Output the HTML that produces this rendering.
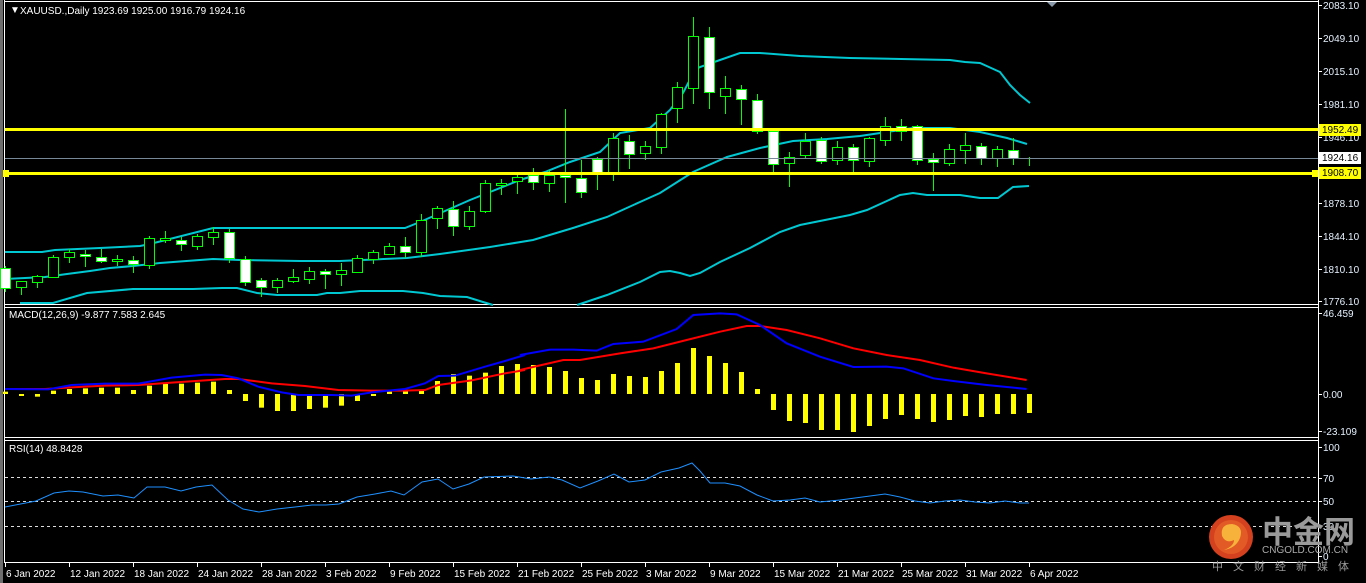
<!DOCTYPE html>
<html><head><meta charset="utf-8"><style>
html,body{margin:0;padding:0;background:#000;width:1366px;height:583px;overflow:hidden}
svg{display:block}
text{font-family:"Liberation Sans",sans-serif;font-size:10px}
</style></head><body>
<svg id="s" width="1366" height="583" xmlns="http://www.w3.org/2000/svg">
<rect width="1366" height="583" fill="#000"/>
<rect x="0" y="0" width="3" height="583" fill="#6e6e6e"/>
<g fill="none" stroke="#fff" stroke-width="1">
<line x1="4.5" y1="0" x2="4.5" y2="563"/>
<line x1="4" y1="1.5" x2="1318" y2="1.5"/>
<line x1="1318.5" y1="0" x2="1318.5" y2="563"/>
<line x1="4" y1="304.5" x2="1318" y2="304.5"/>
<line x1="4" y1="307.5" x2="1318" y2="307.5"/>
<line x1="4" y1="437.5" x2="1318" y2="437.5"/>
<line x1="4" y1="440.5" x2="1318" y2="440.5"/>
<line x1="4" y1="562.5" x2="1318" y2="562.5"/>
</g>
<polygon points="1047,2 1057,2 1052,7" fill="#8a9aaa"/>
<g id="g"></g>
<text x="10" y="13" fill="#fff" font-size="9">▼</text>
<text x="20" y="14" fill="#fff">XAUUSD.,Daily  1923.69 1925.00 1916.79 1924.16</text>
<text x="9" y="318" fill="#fff">MACD(12,26,9) -9.877 7.583 2.645</text>
<text x="9" y="452" fill="#fff">RSI(14) 48.8428</text>
<!-- logo -->
<circle cx="1231" cy="537" r="22" fill="#d4411e"/>
<circle cx="1231" cy="537" r="17" fill="#e25a25"/>
<path d="M1222,536 q-2,-12 10,-12 q12,2 8,14 q-4,10 -16,12 q10,-4 10,-10 q-8,4 -12,-4z" fill="#f6b23a"/>
<text x="1262" y="543" fill="#9a9a9a" style="font-family:'Noto Sans CJK SC',sans-serif;font-size:31px;font-weight:bold">中金网</text>
<text x="1262" y="553" fill="#aaa" font-size="7.5">CNGOLD.COM.CN</text>
<text x="1212" y="570" fill="#9a9a9a" style="font-family:'Noto Sans CJK SC',sans-serif;font-size:11px;letter-spacing:10px">中文财经新媒体</text>
</svg>
<script>
var NS="http://www.w3.org/2000/svg",g=document.getElementById('g');
function el(t,a,txt){var e=document.createElementNS(NS,t);for(var k in a)e.setAttribute(k,a[k]);if(txt!=null)e.textContent=txt;g.appendChild(e);return e;}
function pl(pts,c,w){el('polyline',{points:pts.map(p=>p.join(',')).join(' '),fill:'none',stroke:c,'stroke-width':w});}
var X=i=>5+16*i;
// Bollinger
pl([[5,252],[42,252],[55,250],[100,248],[140,246],[150,244],[213,228],[280,228],[405,228],[420,222],[470,200],[520,180],[545,172],[570,162],[600,152],[620,133],[650,128],[670,110],[683,93],[695,70],[700,67],[720,60],[740,53],[760,53],[800,56],[850,58],[950,60],[965,62],[980,63],[1000,72],[1010,85],[1020,95],[1030,103]],'#00c8d2',2);
pl([[5,279],[45,277],[67,274],[90,271],[110,268],[133,266],[160,263],[213,259],[240,260],[300,261],[340,261],[407,258],[440,254],[490,247],[533,240],[573,228],[607,217],[640,202],[660,193],[693,172],[727,157],[760,148],[793,141],[827,139],[860,136],[887,132],[913,128],[950,128],[980,132],[1007,138],[1027,144]],'#00c8d2',2);
pl([[20,303],[53,303],[87,293],[133,289],[193,289],[222,288],[237,288],[257,293],[277,295],[317,295],[327,293],[340,293],[360,291],[403,291],[423,293],[440,296],[467,297],[483,302],[493,305]],'#00c8d2',2);
pl([[577,305],[607,295],[640,282],[660,272],[670,271],[680,273],[690,276],[700,273],[720,262],[750,248],[780,232],[800,225],[850,215],[867,210],[900,195],[913,193],[927,195],[960,195],[980,198],[998,198],[1013,187],[1029,186]],'#00c8d2',2);
// candles: bodyTop, bodyBot, wickTop, wickBot, bear
var C=[[268,288,266,292,1],[281,287,281,295,0],[276,282,275,288,0],[257,277,255,277,0],[252,257,249,263,0],[254,256,250,267,1],[257,261,249,263,1],[259,261,255,266,0],[260,264,256,273,1],[238,265,236,269,0],[238,240,231,243,0],[240,244,237,251,1],[236,246,234,250,0],[232,237,227,245,0],[232,258,229,263,1],[259,282,256,286,1],[280,287,278,297,1],[280,287,278,293,0],[277,281,269,283,0],[271,279,267,284,0],[271,274,269,289,1],[270,274,263,286,0],[258,272,255,273,0],[252,259,250,264,0],[246,254,243,254,0],[246,252,237,258,1],[220,252,214,257,0],[208,218,206,229,0],[209,226,201,236,1],[211,226,206,230,0],[183,211,180,213,0],[183,185,179,195,0],[177,181,173,194,0],[175,182,168,190,1],[175,183,170,192,0],[175,177,109,203,1],[178,192,160,198,1],[159,172,157,190,1],[138,172,133,181,0],[141,154,135,169,1],[146,153,141,160,0],[114,147,113,154,0],[87,108,82,123,0],[36,88,17,104,0],[37,92,27,109,1],[88,96,76,114,0],[89,99,85,125,1],[100,131,94,134,1],[131,164,128,172,1],[157,163,152,187,0],[141,155,133,158,0],[140,161,137,164,1],[147,160,141,165,0],[147,160,144,172,1],[138,161,137,167,0],[126,140,117,146,0],[126,131,119,141,1],[126,160,125,165,1],[159,162,153,191,1],[149,163,144,166,0],[145,150,133,164,0],[146,158,143,165,1],[149,158,146,167,0],[150,158,138,165,1],[158,158,157,166,0]];
C.forEach(function(c,i){var x=X(i)+0.5;
el('line',{x1:x,y1:c[2],x2:x,y2:c[3],stroke:'#00ff00','stroke-width':1});
if(c[1]-c[0]<1){el('line',{x1:x-5,y1:c[0]+.5,x2:x+5,y2:c[0]+.5,stroke:'#00ff00'});}
else el('rect',{x:x-5,y:c[0]+.5,width:10,height:c[1]-c[0],fill:c[4]?'#fff':'#000',stroke:'#00ff00','stroke-width':1});
});
// horizontal lines
el('line',{x1:5,y1:158.5,x2:1318,y2:158.5,stroke:'#778899','stroke-width':1});
el('rect',{x:5,y:128,width:1313,height:3,fill:'#ffff00'});
el('rect',{x:5,y:172,width:1313,height:3,fill:'#ffff00'});
el('rect',{x:3,y:170,width:6,height:7,fill:'#ffff00'});
el('rect',{x:1312,y:170,width:6,height:7,fill:'#ffff00'});
// price axis
var P=[['2083.10',5],['2049.10',38],['2015.10',71],['1981.10',104],['1946.10',137],['1912.10',170],['1878.10',203],['1844.10',236],['1810.10',269],['1776.10',301]];
P.forEach(function(p){el('line',{x1:1318,y1:p[1]+.5,x2:1322,y2:p[1]+.5,stroke:'#fff'});el('text',{x:1323,y:p[1]+4,fill:'#e6f2ff'},p[0]);});
el('rect',{x:1319,y:124,width:42,height:12,fill:'#ffff00'});el('text',{x:1322,y:133,fill:'#000'},'1952.49');
el('rect',{x:1319,y:152,width:42,height:12,fill:'#fff'});el('text',{x:1322,y:161,fill:'#000'},'1924.16');
el('rect',{x:1319,y:167,width:42,height:12,fill:'#ffff00'});el('text',{x:1322,y:176,fill:'#000'},'1908.70');
// MACD hist
var H=[260,273,275,257,252,250,248,248,255,242,237,236,233,230,255,288,308,318,318,312,308,302,288,273,260,258,255,228,207,212,203,183,177,180,186,198,219,225,207,213,216,198,174,129,153,174,201,252,315,348,354,375,375,381,363,342,330,342,351,345,333,336,327,327,324];
H.forEach(function(h,i){var y=h/3+305,z=394;el('rect',{x:X(i)-2,y:Math.min(y,z),width:5,height:Math.max(1,Math.abs(y-z)),fill:'#ffff00'});});
function cv(a,ox){return a.map(p=>[p[0]/3+ox,p[1]/3+305]);}
var B=cv([[0,252],[130,253],[200,240],[300,236],[400,236],[500,218],[600,209],[650,210],[700,220],[760,245],[830,262],[880,270],[980,270],[1040,272],[1100,262],[1200,252],[1260,235],[1300,213],[1350,212],[1440,185],[1500,168],[1560,150]],5).concat(cv([[0,150],[90,134],[160,134],[230,137],[280,117],[370,110],[470,72],[520,30],[600,25],[650,28],[720,60],[800,115],[900,155],[1000,186],[1100,185],[1150,190],[1240,220],[1300,228],[1400,240],[1520,252]],520));
var R=cv([[0,252],[120,252],[200,247],[300,242],[400,240],[500,233],[600,226],[660,222],[700,222],[800,235],[900,243],[1000,255],[1100,257],[1200,257],[1260,255],[1300,240],[1400,226],[1500,205],[1560,195]],5).concat(cv([[0,195],[130,165],[180,165],[300,145],[400,130],[500,105],[600,80],[680,63],[720,63],[800,75],[900,100],[1000,130],[1100,150],[1200,165],[1300,188],[1400,205],[1520,225]],520));
pl(R,'#ff0000',2);pl(B,'#0000ff',2);
[['46.459',313],['0.00',394],['-23.109',431]].forEach(function(p){el('line',{x1:1318,y1:p[1]+.5,x2:1322,y2:p[1]+.5,stroke:'#fff'});el('text',{x:1323,y:p[1]+4,fill:'#e6f2ff'},p[0]);});
// RSI
[477,501,526].forEach(function(y){el('line',{x1:5,y1:y+.5,x2:1318,y2:y+.5,stroke:'#ddd','stroke-dasharray':'3,3'});});
pl([[5,507],[36,501],[54,493],[69,491],[83,492],[103,496],[118,495],[134,498],[147,487],[165,487],[181,491],[196,487],[212,485],[228,500],[243,509],[259,512],[277,509],[295,507],[312,505],[326,505],[339,504],[357,497],[375,494],[391,491],[404,495],[422,482],[438,479],[453,489],[469,484],[484,477],[513,476],[531,479],[549,477],[562,480],[580,488],[598,481],[614,474],[629,482],[645,480],[661,472],[679,468],[692,463],[700,471],[710,483],[725,483],[740,486],[757,495],[773,501],[790,500],[805,498],[820,502],[840,500],[855,498],[870,496],[885,494],[900,497],[915,501],[930,503],[945,501],[960,500],[975,502],[990,503],[1005,501],[1020,503],[1029,503]],'#1e90ff',1);
[['100',447],['70',478],['50',501],['30',526],['0',556]].forEach(function(p){el('line',{x1:1318,y1:p[1]+.5,x2:1322,y2:p[1]+.5,stroke:'#fff'});el('text',{x:1323,y:p[1]+4,fill:'#e6f2ff'},p[0]);});
// dates
var D=['6 Jan 2022','12 Jan 2022','18 Jan 2022','24 Jan 2022','28 Jan 2022','3 Feb 2022','9 Feb 2022','15 Feb 2022','21 Feb 2022','25 Feb 2022','3 Mar 2022','9 Mar 2022','15 Mar 2022','21 Mar 2022','25 Mar 2022','31 Mar 2022','6 Apr 2022'];
D.forEach(function(d,k){var x=5+64*k;el('line',{x1:x+.5,y1:563,x2:x+.5,y2:567,stroke:'#fff'});el('text',{x:x+1,y:577,fill:'#fff'},d);});
</script>
</body></html>
